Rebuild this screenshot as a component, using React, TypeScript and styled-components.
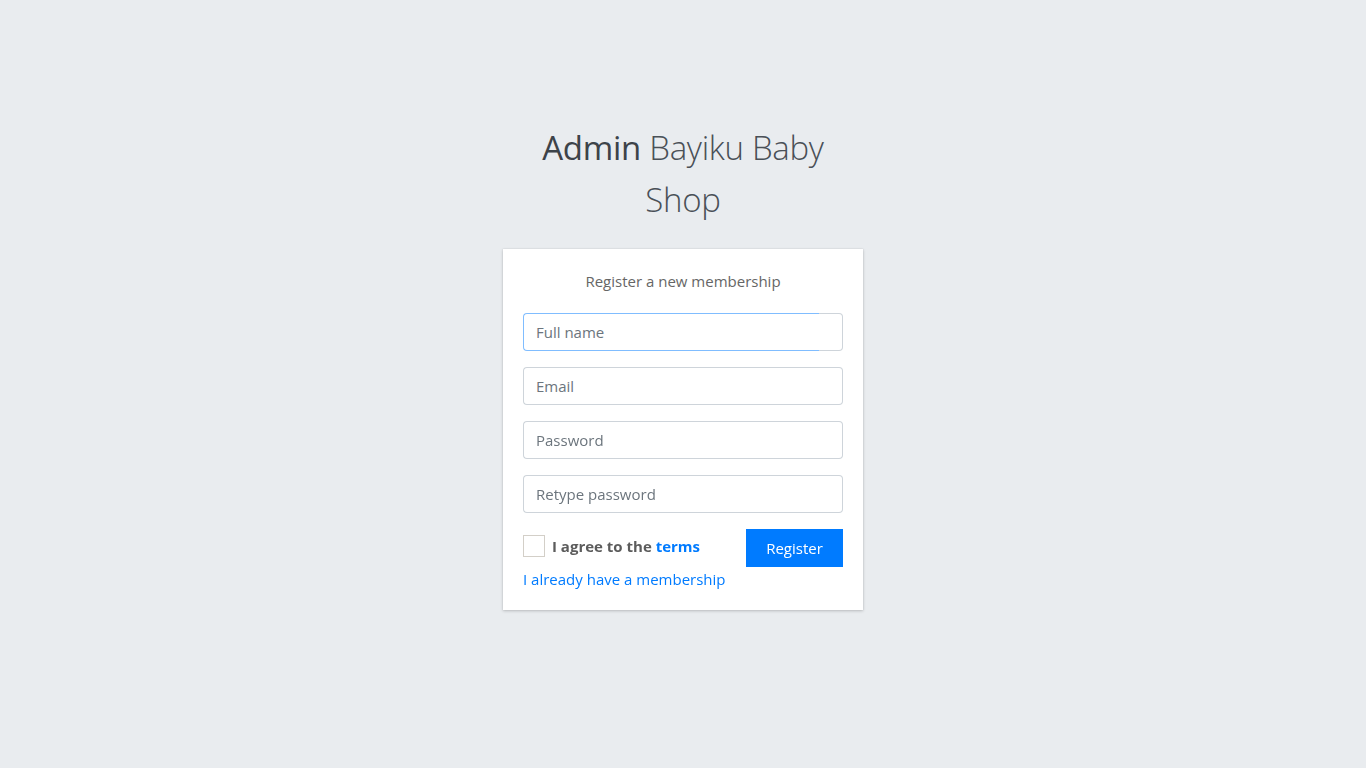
import React from "react";
import styled, { createGlobalStyle } from "styled-components";

const Global = createGlobalStyle`
  html, body { margin: 0; padding: 0; }
  body {
    background: #e9ecef;
    font-family: "Open Sans", "Noto Sans", sans-serif;
    color: #212529;
  }
  * { box-sizing: border-box; }
`;

const Page = styled.div`
  min-height: 768px;
  display: flex;
  flex-direction: column;
  align-items: center;
  padding-top: 122px;
`;

const Box = styled.div`
  width: 360px;
  display: flex;
  flex-direction: column;
`;

const Logo = styled.h1`
  margin: 0 0 23px;
  font-size: 33px;
  line-height: 52px;
  font-weight: 300;
  text-align: center;
  color: #495057;
  letter-spacing: -0.3px;
  b { font-weight: 400; color: #3d4349; }
`;

const Card = styled.div`
  background: #fff;
  box-shadow: 0 0 1px rgba(0, 0, 0, 0.125), 0 1px 3px rgba(0, 0, 0, 0.2);
  padding: 20px 20px 19px;
  display: flex;
  flex-direction: column;
`;

const Message = styled.p`
  margin: 0 0 20px;
  text-align: center;
  font-size: 15px;
  line-height: 24px;
  color: #666;
`;

const Group = styled.div`
  display: flex;
  height: 38px;
  margin-bottom: 16px;
`;

const Input = styled.input<{ $focused?: boolean }>`
  flex: 1;
  min-width: 0;
  height: 38px;
  border: 1px solid ${(p) => (p.$focused ? "#80bdff" : "#ced4da")};
  border-right: 0;
  border-radius: 4px 0 0 4px;
  padding: 0 12px;
  font-family: inherit;
  font-size: 15px;
  color: #495057;
  outline: none;
  &::placeholder { color: #6c757d; opacity: 1; }
`;

const Append = styled.div`
  width: 24px;
  height: 38px;
  border: 1px solid #ced4da;
  border-left: 0;
  border-radius: 0 4px 4px 0;
`;

const Row = styled.div`
  display: flex;
  justify-content: space-between;
  align-items: flex-start;
`;

const Agree = styled.label`
  display: flex;
  align-items: center;
  gap: 7px;
  height: 22px;
  margin-top: 6px;
  font-size: 15px;
  font-weight: 700;
  color: #5c5c5c;
`;

const Check = styled.span`
  width: 22px;
  height: 22px;
  border: 1px solid #d3cfc8;
  background: #fff;
`;

const Link = styled.a`
  color: #007bff;
  text-decoration: none;
  font-weight: inherit;
`;

const Button = styled.button`
  width: 97px;
  height: 38px;
  background: #007bff;
  border: 1px solid #007bff;
  border-radius: 0;
  color: #fff;
  font-family: inherit;
  font-size: 15px;
  padding: 0;
`;

const Footer = styled.a`
  color: #007bff;
  font-size: 15px;
  line-height: 24px;
  text-decoration: none;
`;

const fields = ["Full name", "Email", "Password", "Retype password"];

export default function App() {
  return (
    <>
      <Global />
      <Page>
        <Box>
          <Logo>
            <b>Admin</b> Bayiku Baby
            <br />
            Shop
          </Logo>
          <Card>
            <Message>Register a new membership</Message>
            {fields.map((f, i) => (
              <Group key={f}>
                <Input
                  placeholder={f}
                  type={f.toLowerCase().includes("password") ? "password" : "text"}
                  $focused={i === 0}
                  autoFocus={i === 0}
                />
                <Append />
              </Group>
            ))}
            <Row>
              <Agree>
                <Check />
                <span>
                  I agree to the <Link href="#">terms</Link>
                </span>
              </Agree>
              <Button>Register</Button>
            </Row>
            <Footer href="#">I already have a membership</Footer>
          </Card>
        </Box>
      </Page>
    </>
  );
}
